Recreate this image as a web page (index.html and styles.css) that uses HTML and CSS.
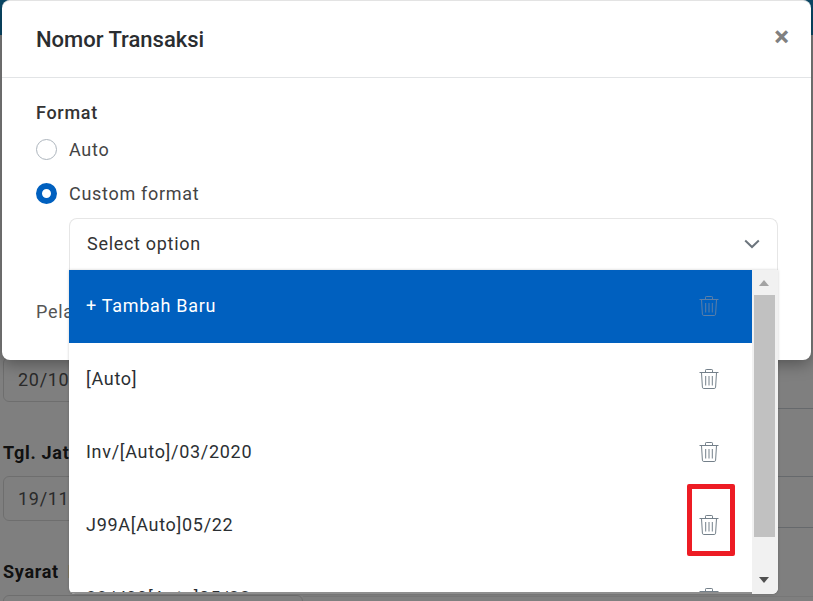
FILE: index.html
```html
<!DOCTYPE html>
<html lang="en">
<head>
    <meta charset="UTF-8">
    <meta name="viewport" content="width=device-width, initial-scale=1.0">
    <title>Nomor Transaksi</title>
    <link rel="stylesheet" href="styles.css">
</head>
<body>
    <svg class="icon-defs" width="0" height="0" aria-hidden="true">
        <symbol id="trash" viewBox="0 0 20 20">
            <path d="M6.500 3V1.200q0-.7.7-.7h5.600q.7 0 .7.7V3"/>
            <path d="M.5 3.500h19"/>
            <path d="M2.500 3.500l.9 14.700q.1 1.300 1.400 1.300h10.400q1.300 0 1.400-1.300l.9-14.700"/>
            <path d="M6.700 7v9.500M10 7v9.500M13.300 7v9.500"/>
        </symbol>
    </svg>

    <!-- page behind the modal -->
    <div class="page-clip">
        <header class="top-bar"></header>
        <main class="form-page">
            <div class="form-left">
                <div class="field first">
                    <input class="field-input" type="text" value="20/10/2020">
                </div>
                <div class="field">
                    <label class="field-label">Tgl. Jatuh Tempo</label>
                    <input class="field-input" type="text" value="19/11/2020">
                </div>
                <div class="field">
                    <label class="field-label wide-space">Syarat Pembayaran</label>
                    <input class="field-input" type="text">
                </div>
            </div>
            <div class="form-right">
                <div class="line-row r1"></div>
                <div class="line-row r2"></div>
                <div class="line-row r3"></div>
                <div class="line-row r4"></div>
            </div>
        </main>
    </div>
    <div class="backdrop"></div>

    <section class="modal">
        <div class="modal-header">
            <h2>Nomor Transaksi</h2>
            <span class="close">&times;</span>
        </div>
        <div class="modal-body">
            <p class="group-title">Format</p>
            <div class="radio-row">
                <span class="radio"></span>
                <span>Auto</span>
            </div>
            <div class="radio-row">
                <span class="radio checked"></span>
                <span>Custom format</span>
            </div>
            <div class="select-spacer"></div>
            <p class="cut-label">Pelanggan</p>
        </div>

        <div class="select-box">
            <div class="select-head">
                <span>Select option</span>
                <svg class="chevron" width="16" height="10" viewBox="0 0 16 10"><path d="M1.200 1.500L8 8l6.800-6.500"/></svg>
            </div>
            <div class="select-drop">
                <ul class="option-list">
                    <li class="option active">
                        <span>+ Tambah Baru</span>
                        <svg class="trash"><use href="#trash"/></svg>
                    </li>
                    <li class="option">
                        <span>[Auto]</span>
                        <svg class="trash"><use href="#trash"/></svg>
                    </li>
                    <li class="option">
                        <span>Inv/[Auto]/03/2020</span>
                        <svg class="trash"><use href="#trash"/></svg>
                    </li>
                    <li class="option">
                        <span>J99A[Auto]05/22</span>
                        <svg class="trash"><use href="#trash"/></svg>
                        <div class="highlight"></div>
                    </li>
                    <li class="option">
                        <span>88/J99[Auto]05/22</span>
                        <svg class="trash"><use href="#trash"/></svg>
                    </li>
                </ul>
                <div class="scrollbar">
                    <div class="arrow up"></div>
                    <div class="thumb"></div>
                    <div class="arrow down"></div>
                </div>
            </div>
        </div>
    </section>
</body>
</html>
```

FILE: styles.css
```css
* {
    box-sizing: border-box;
}
html, body {
    height: 100%;
}
body {
    font-family: Roboto, Arial, sans-serif;
    margin: 0;
    overflow: hidden;
    background-color: white;
    color: #333;
}
.icon-defs {
    position: absolute;
}
.page-clip {
    height: 100%;
    overflow: hidden;
}
.top-bar {
    height: 35px;
    background-color: #1495d4;
}
.form-page {
    display: flex;
}
.form-left {
    width: 300px;
    margin-left: 3px;
    flex-shrink: 0;
}
.field {
    margin-top: 39px;
}
.field.first {
    margin-top: 322px;
}
.field-label {
    display: block;
    font-size: 18px;
    font-weight: 700;
    letter-spacing: 0.7px;
    line-height: 24px;
    color: #222;
    margin-bottom: 11px;
}
.wide-space {
    word-spacing: 4px;
}
.field-input {
    display: block;
    width: 100%;
    height: 45px;
    padding: 0 14px;
    font-family: inherit;
    font-size: 18px;
    letter-spacing: 0.7px;
    color: #555;
    border: 1px solid #ddd;
    border-radius: 6px;
    background: white;
}
.form-right {
    flex: 1;
}
.line-row {
    border-bottom: 1px solid #ccd2d8;
}
.r1 { height: 374px; }
.r2 { height: 68px; }
.r3 { height: 51px; }
.r4 { height: 69px; border-color: #eee; }
.backdrop {
    position: absolute;
    inset: 0;
    background-color: rgba(0, 0, 0, 0.5);
}
.modal {
    position: absolute;
    left: 2px;
    top: 0;
    width: 809px;
    height: 360px;
    background-color: white;
    border-top: 1px solid #e3e3e3;
    border-radius: 8px;
    box-shadow: 0 4px 16px rgba(0, 0, 0, 0.35);
}
.modal-header {
    display: flex;
    align-items: center;
    justify-content: space-between;
    height: 77px;
    padding: 0 22px 0 34px;
    border-bottom: 1px solid #e2e4e6;
}
.modal-header h2 {
    margin: 0;
    font-size: 22px;
    font-weight: 500;
    color: #2a2d30;
}
.close {
    margin-bottom: 4px;
    font-size: 28px;
    font-weight: 700;
    line-height: 1;
    color: #808080;
}
.modal-body {
    padding: 23px 34px 0;
    font-size: 18px;
    letter-spacing: 0.7px;
    color: #444;
}
.group-title {
    margin: 0 0 2px;
    font-weight: 500;
    line-height: 24px;
    color: #333;
}
.radio-row {
    display: flex;
    align-items: center;
    gap: 12px;
    height: 44px;
}
.radio {
    width: 21px;
    height: 21px;
    border: 1px solid #adb5bd;
    border-radius: 50%;
    background-color: white;
}
.radio.checked {
    border: 6.5px solid #0060bf;
}
.select-spacer {
    height: 85px;
}
.cut-label {
    margin: 0;
    line-height: 24px;
    color: #555;
}
.select-box {
    position: absolute;
    left: 67px;
    top: 217px;
    width: 709px;
    font-size: 18px;
    letter-spacing: 0.7px;
    color: #333;
}
.select-head {
    display: flex;
    align-items: center;
    justify-content: space-between;
    height: 52px;
    padding: 0 17px 2px;
    background-color: white;
    border: 1px solid #e6e6e6;
    border-bottom: none;
    border-radius: 8px 8px 0 0;
}
.chevron path {
    fill: none;
    stroke: #6c757d;
    stroke-width: 2;
}
.select-drop {
    display: flex;
    height: 324px;
    background-color: white;
    border-radius: 0 0 6px 6px;
    overflow: hidden;
    box-shadow: 0 0 3px rgba(0, 0, 0, 0.2);
}
.option-list {
    flex: 1;
    list-style: none;
    margin: 0;
    padding: 0;
    height: 324px;
    overflow: hidden;
    border-bottom: 2px solid #8f8f8f;
}
.option {
    position: relative;
    display: flex;
    align-items: center;
    justify-content: space-between;
    height: 73px;
    padding: 0 33px 2px 17px;
    color: #2b2f33;
}
.option.active {
    background-color: #0060bf;
    color: white;
}
.trash {
    width: 20px;
    height: 20px;
    fill: none;
    stroke: #74808a;
    stroke-width: 1;
}
.active .trash {
    stroke: #5c7fa8;
}
.highlight {
    position: absolute;
    top: -5px;
    right: 17px;
    width: 48px;
    height: 72px;
    border: 5px solid #ed1c24;
    border-radius: 2px;
}
.scrollbar {
    display: flex;
    flex-direction: column;
    width: 26px;
    padding: 0 3px 0 2px;
    background-color: #f1f1f1;
}
.arrow {
    width: 21px;
    height: 25px;
    flex-shrink: 0;
    position: relative;
}
.arrow::after {
    content: "";
    position: absolute;
    left: 5px;
    border-left: 5.5px solid transparent;
    border-right: 5.5px solid transparent;
}
.arrow.up::after {
    top: 10px;
    border-bottom: 6px solid #a3a3a3;
}
.arrow.down::after {
    top: 9px;
    border-top: 6px solid #505050;
}
.thumb {
    height: 242px;
    flex-shrink: 0;
    background-color: #c1c1c1;
}
.arrow.down {
    margin-top: 31px;
}
```
